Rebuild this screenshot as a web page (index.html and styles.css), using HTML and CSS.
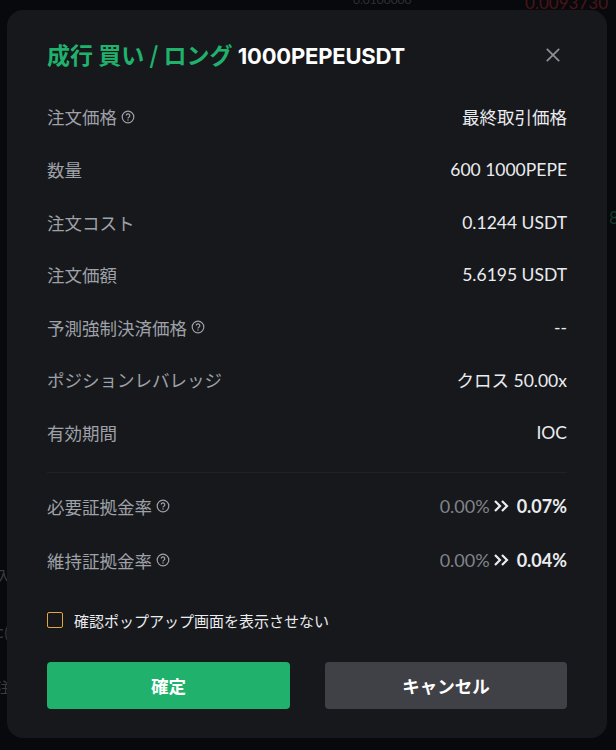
FILE: index.html
```html
<!DOCTYPE html>
<html lang="ja">
<head>
<meta charset="utf-8">
<link rel="stylesheet" href="styles.css">
</head>
<body>
<div class="backdrop">
  <span class="bg-num">0.0093730</span>
  <span class="bg-num2">0.0100000</span>
  <span class="bg-green">8</span>
  <span class="bg-left l1">入</span>
  <span class="bg-left l2">c(</span>
  <span class="bg-left l3">注</span>
</div>
<div class="modal">
  <div class="header">
    <h1 class="title"><span class="green">成行 買い / ロング</span> <span class="sym">1000PEPEUSDT</span></h1>
    <svg class="close" width="18" height="18" viewBox="0 0 18 18"><path d="M2 2 L16 16 M16 2 L2 16" stroke="#8b8e94" stroke-width="2" fill="none"/></svg>
  </div>
  <div class="list">
    <div class="row"><span class="label">注文価格<svg class="q" viewBox="0 0 14 14"><circle cx="7" cy="7" r="5.8" fill="none" stroke="currentColor" stroke-width="1.2"/><path d="M5.2 5.6a1.8 1.8 0 1 1 2.6 1.6c-.6.3-.8.6-.8 1.2" fill="none" stroke="currentColor" stroke-width="1.2"/><circle cx="7" cy="10.1" r=".75" fill="currentColor"/></svg></span><span class="value">最終取引価格</span></div>
    <div class="row"><span class="label">数量</span><span class="value">600 1000PEPE</span></div>
    <div class="row"><span class="label">注文コスト</span><span class="value">0.1244 USDT</span></div>
    <div class="row"><span class="label">注文価額</span><span class="value">5.6195 USDT</span></div>
    <div class="row"><span class="label">予測強制決済価格<svg class="q" viewBox="0 0 14 14"><circle cx="7" cy="7" r="5.8" fill="none" stroke="currentColor" stroke-width="1.2"/><path d="M5.2 5.6a1.8 1.8 0 1 1 2.6 1.6c-.6.3-.8.6-.8 1.2" fill="none" stroke="currentColor" stroke-width="1.2"/><circle cx="7" cy="10.1" r=".75" fill="currentColor"/></svg></span><span class="value">--</span></div>
    <div class="row"><span class="label">ポジションレバレッジ</span><span class="value">クロス 50.00x</span></div>
    <div class="row"><span class="label">有効期間</span><span class="value">IOC</span></div>
  </div>
  <div class="divider"></div>
  <div class="list list2">
    <div class="row"><span class="label">必要証拠金率<svg class="q" viewBox="0 0 14 14"><circle cx="7" cy="7" r="5.8" fill="none" stroke="currentColor" stroke-width="1.2"/><path d="M5.2 5.6a1.8 1.8 0 1 1 2.6 1.6c-.6.3-.8.6-.8 1.2" fill="none" stroke="currentColor" stroke-width="1.2"/><circle cx="7" cy="10.1" r=".75" fill="currentColor"/></svg></span><span class="value"><span class="old">0.00%</span><svg class="arrow" viewBox="0 0 18 14"><path d="M2 2 L7 7 L2 12 M9 2 L14 7 L9 12" fill="none" stroke="#eaecef" stroke-width="2.2"/></svg><span class="new">0.07%</span></span></div>
    <div class="row"><span class="label">維持証拠金率<svg class="q" viewBox="0 0 14 14"><circle cx="7" cy="7" r="5.8" fill="none" stroke="currentColor" stroke-width="1.2"/><path d="M5.2 5.6a1.8 1.8 0 1 1 2.6 1.6c-.6.3-.8.6-.8 1.2" fill="none" stroke="currentColor" stroke-width="1.2"/><circle cx="7" cy="10.1" r=".75" fill="currentColor"/></svg></span><span class="value"><span class="old">0.00%</span><svg class="arrow" viewBox="0 0 18 14"><path d="M2 2 L7 7 L2 12 M9 2 L14 7 L9 12" fill="none" stroke="#eaecef" stroke-width="2.2"/></svg><span class="new">0.04%</span></span></div>
  </div>
  <label class="check"><span class="box"></span>確認ポップアップ画面を表示させない</label>
  <div class="buttons">
    <button class="btn confirm">確定</button>
    <button class="btn cancel">キャンセル</button>
  </div>
</div>
</body>
</html>
```
FILE: styles.css
```css
html, body {
  margin: 0;
  padding: 0;
  background: #08090c;
  width: 616px;
  height: 750px;
  overflow: hidden;
  font-family: Lato, "Noto Sans CJK JP", sans-serif;
}
.backdrop {
  position: absolute;
  left: 0;
  top: 0;
  width: 616px;
  height: 750px;
}
.bg-num {
  position: absolute;
  right: 8px;
  top: -8px;
  color: #4a1519;
  font-size: 17px;
}
.bg-num2 {
  position: absolute;
  left: 353px;
  top: -8px;
  color: #2d3036;
  font-size: 12px;
}
.bg-green {
  position: absolute;
  left: 609px;
  top: 207px;
  color: #123a26;
  font-size: 17px;
}
.bg-left {
  position: absolute;
  left: -4px;
  color: #3a3c42;
  font-size: 15px;
  font-family: "Noto Sans CJK JP", sans-serif;
}
.l1 { top: 565px; }
.l2 { top: 621px; }
.l3 { top: 676px; }
.modal {
  position: relative;
  margin: 10px 0 0 7px;
  width: 600px;
  height: 728px;
  box-sizing: border-box;
  background: #17181c;
  border-radius: 16px;
  padding: 30px 40px 0 40px;
}
.header {
  display: flex;
  align-items: center;
  justify-content: space-between;
  height: 30px;
  margin-bottom: 20.6px;
}
.title {
  margin: 0;
  font-family: "Noto Sans CJK JP", sans-serif;
  font-size: 23px;
  font-weight: 700;
  color: #ffffff;
  line-height: 30px;
  white-space: nowrap;
}
.sym {
  font-family: Inter, sans-serif;
  font-size: 22px;
  letter-spacing: -0.2px;
}
.green {
  color: #20b26c;
}
.close {
  margin-right: 6px;
  width: 16px;
  height: 16px;
}
.list {
  display: flex;
  flex-direction: column;
}
.row {
  height: 52.6px;
  display: flex;
  align-items: center;
  justify-content: space-between;
  font-size: 17.5px;
}
.label {
  color: #9ea1a7;
  display: flex;
  align-items: center;
  font-family: "Noto Sans CJK JP", sans-serif;
}
.q {
  width: 14px;
  height: 14px;
  margin-left: 4px;
  color: #9ea1a7;
}
.value {
  color: #eaecef;
  display: flex;
  align-items: center;
  font-weight: 400;
}
.old {
  color: #81848a;
  font-size: 18px;
}
.new {
  font-weight: 700;
  font-size: 18px;
}
.arrow {
  width: 18px;
  height: 14px;
  margin: 0 6px 0 3px;
}
.divider {
  height: 1px;
  background: #1f2126;
  margin-top: 12.8px;
  margin-bottom: 6.8px;
}
.list2 .row {
  height: 54px;
}
.check {
  display: flex;
  align-items: center;
  margin-top: 18px;
  height: 30px;
  font-family: "Noto Sans CJK JP", sans-serif;
  font-size: 15px;
  color: #eaecef;
}
.box {
  width: 14px;
  height: 14px;
  border: 1.5px solid #e3a73f;
  border-radius: 2px;
  margin-right: 11px;
}
.buttons {
  display: flex;
  justify-content: space-between;
  margin-top: 27px;
}
.btn {
  width: 243px;
  height: 47px;
  border: none;
  border-radius: 4px;
  font-family: "Noto Sans CJK JP", sans-serif;
  font-size: 17.5px;
  font-weight: 700;
  color: #ffffff;
}
.confirm {
  background: #20b26c;
}
.cancel {
  width: 242px;
  background: #3f4146;
}
```
